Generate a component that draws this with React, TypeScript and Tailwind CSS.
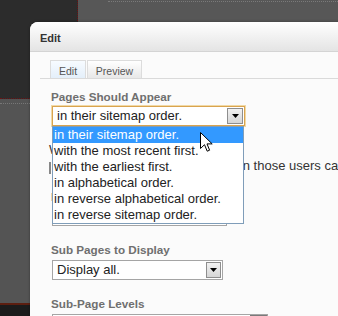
import React from "react";

const Arrow = ({ w = 16, h = 16 }: { w?: number; h?: number }) => (
  <div
    className="flex items-center justify-center border border-[#8e8e8e] bg-gradient-to-b from-[#f2f2f2] to-[#d6d6d6]"
    style={{ width: w, height: h }}
  >
    <svg width="7" height="4" viewBox="0 0 7 4">
      <path d="M0 0H7L3.5 4Z" fill="#000" />
    </svg>
  </div>
);

const options = [
  "in their sitemap order.",
  "with the most recent first.",
  "with the earliest first.",
  "in alphabetical order.",
  "in reverse alphabetical order.",
  "in reverse sitemap order.",
];

export default function App() {
  return (
    <div
      className="relative w-[338px] h-[316px] overflow-hidden"
      style={{ fontFamily: '"Liberation Sans", Arial, sans-serif' }}
    >
      {/* background page */}
      <div className="flex flex-col w-full h-full">
        <div className="flex h-[303px]">
          <div className="flex flex-col w-[78px]">
            <div className="h-[99px] bg-[#2c2c2c] border-r border-b border-dotted border-[#6a1414]" />
            <div className="flex-1 bg-[#545454] pt-[4px]">
              <div className="border-t border-dotted border-[#777]" />
            </div>
          </div>
          <div className="flex-1 bg-[#575757] pl-[30px] pt-[1px]">
            <div className="border-t border-dotted border-[#7a7a7a]" />
          </div>
        </div>
        <div className="flex-1 bg-[#1b1b1b] border-t-2 border-[#5c1e10]" />
      </div>

      {/* modal */}
      <div className="absolute left-[30px] top-[22px] w-[330px] h-[310px] rounded-tl-[8px] bg-[#fbfbfb] shadow-[0_0_3px_rgba(0,0,0,0.35)] overflow-hidden">
        <div className="h-[30px] border-b border-[#d4d4d4] bg-gradient-to-b from-[#ffffff] to-[#e4e4e4] pl-[10px] pt-[10px]">
          <div className="text-[11px] leading-[13px] font-bold text-[#333]">Edit</div>
        </div>

        <div className="mt-[8px] ml-[10px] border-b border-[#dadada] flex pl-[10px] gap-[1px]">
          <div className="w-[36px] h-[18px] border border-b-0 border-[#dcdcdc] bg-gradient-to-b from-[#f7fbff] to-[#e4effa] text-center text-[10.5px] leading-[14px] pt-[3px] text-[#555]">
            Edit
          </div>
          <div className="w-[55px] h-[18px] border border-b-0 border-[#dcdcdc] bg-gradient-to-b from-[#ffffff] to-[#e8e8e8] text-center text-[10.5px] leading-[14px] pt-[3px] text-[#555]">
            Preview
          </div>
        </div>

        <div className="pl-[21px]">
          <div className="mt-[11px] text-[11.7px] leading-[14px] font-bold text-[#6f6f6f]">
            Pages Should Appear
          </div>

          <div className="relative mt-[2px] ml-[1px] w-[193px] h-[20px]">
            <div className="flex items-center h-full border border-[#d9a44f] shadow-[0_0_0_1px_#f1d9a6] bg-white">
              <div className="flex-1 pl-[4px] text-[13px] leading-[16px] text-[#222]">
                in their sitemap order.
              </div>
              <div className="mr-[1px]">
                <Arrow w={16} h={16} />
              </div>
            </div>

            {/* open list */}
            <div className="absolute left-0 top-full z-10 w-[192px] border border-[#7f9db9] bg-white">
              {options.map((o, i) => (
                <div
                  key={o}
                  className={
                    i === 0
                      ? "h-[16px] pl-[1px] text-[13px] leading-[16px] bg-[#3399ff] text-white"
                      : "h-[16px] pl-[1px] text-[13px] leading-[16px] text-[#222]"
                  }
                >
                  {o}
                </div>
              ))}
            </div>
          </div>

          {/* content hidden under the list */}
          <div className="mt-[16px] -ml-[2px] text-[13px] leading-[16px] text-[#333] whitespace-nowrap">
            Who can see pages
          </div>
          <div className="flex items-center h-[16px] -ml-[2px] whitespace-nowrap">
            <div className="w-[12px] h-[12px] border border-[#888] bg-white mt-[3px]" />
            <div className="ml-[1px] text-[13px] leading-[16px] text-[#333]">
              Display pages to users even when those users cannot see them.
            </div>
          </div>
          <div className="mt-[16px] text-[11.7px] leading-[14px] font-bold text-[#6f6f6f]">
            Include Hidden
          </div>
          <div className="mt-[2px] ml-[1px] w-[175px] h-[20px] flex items-center border border-[#a5a5a5] bg-white">
            <div className="flex-1 pl-[4px] text-[13px] leading-[16px] text-[#222]">No.</div>
            <div className="mr-[1px]">
              <Arrow w={16} h={16} />
            </div>
          </div>

          <div className="mt-[17px] text-[11.7px] leading-[14px] font-bold text-[#6f6f6f]">
            Sub Pages to Display
          </div>
          <div className="mt-[3px] ml-[1px] w-[171px] h-[20px] flex items-center border border-[#a5a5a5] bg-white">
            <div className="flex-1 pl-[4px] text-[13px] leading-[16px] text-[#222]">Display all.</div>
            <div className="mr-[1px]">
              <Arrow w={15} h={16} />
            </div>
          </div>

          <div className="mt-[17px] text-[11.7px] leading-[14px] font-bold text-[#6f6f6f]">
            Sub-Page Levels
          </div>
          <div className="mt-[3px] ml-[1px] w-[216px] h-[20px] flex border border-[#a5a5a5] bg-white">
            <div className="flex-1" />
            <div className="w-[17px] bg-[#7a7a7a]" />
          </div>
        </div>
      </div>

      {/* mouse cursor */}
      <svg
        className="absolute left-[200px] top-[132px] z-20"
        width="13"
        height="21"
        viewBox="0 0 13 21"
      >
        <path
          d="M0.5 0.5V16.5L4.5 12.7L7.2 19.2L9.6 18.2L7 11.9H12.2Z"
          fill="#fff"
          stroke="#000"
          strokeWidth="1"
          strokeLinejoin="miter"
        />
      </svg>
    </div>
  );
}
